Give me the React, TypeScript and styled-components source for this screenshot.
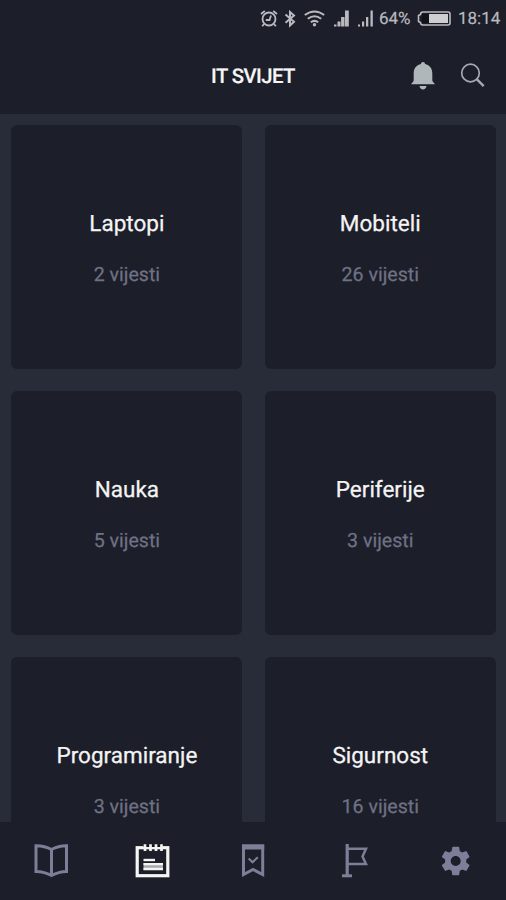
import React from 'react';
import styled, { createGlobalStyle } from 'styled-components';

const Global = createGlobalStyle`
  * { box-sizing: border-box; }
  body {
    margin: 0;
    background: #1c1e29;
    font-family: Roboto, sans-serif;
    text-rendering: geometricPrecision;
  }
`;

const Screen = styled.div`
  display: flex;
  flex-direction: column;
  width: 506px;
  height: 900px;
  overflow: hidden;
  background: #282c38;
`;

const StatusBar = styled.div`
  display: flex;
  align-items: center;
  justify-content: flex-end;
  flex: none;
  height: 38px;
  padding-right: 6px;
  background: #1c1e29;
  color: #b9bac0;
  font-size: 17px;
  line-height: 38px;
  -webkit-text-stroke: 0.2px currentColor;
`;

const StatusIcon = styled.svg<{ $gap: number }>`
  flex: none;
  display: block;
  margin-right: ${(p) => p.$gap}px;
`;

const StatusText = styled.span<{ $width: number }>`
  width: ${(p) => p.$width}px;
  white-space: nowrap;
`;

const Header = styled.header`
  display: grid;
  grid-template-columns: 1fr auto 1fr;
  align-items: center;
  flex: none;
  height: 76px;
  background: #1c1e29;
`;

const Title = styled.h1`
  grid-column: 2;
  margin: 0;
  color: #f6f6f6;
  font-size: 20.3px;
  font-weight: 500;
  letter-spacing: -0.55px;
  -webkit-text-stroke: 0.2px currentColor;
`;

const Actions = styled.div`
  display: flex;
  justify-content: flex-end;
  gap: 24.5px;
  padding-right: 20px;
`;

const IconButton = styled.button`
  display: flex;
  padding: 0;
  border: 0;
  background: none;
`;

const Grid = styled.main`
  display: grid;
  grid-template-columns: 231px 231px;
  grid-auto-rows: 244px;
  gap: 22px 22.4px;
  flex: none;
  height: 708px;
  padding: 11px 10px 0 11.4px;
  overflow: hidden;
`;

const Card = styled.section`
  display: flex;
  flex-direction: column;
  align-items: center;
  padding-top: 83.5px;
  border-radius: 6px;
  background: #1c1e29;
`;

const CardTitle = styled.h2`
  margin: 0;
  color: #f4f4f4;
  font-size: 22.5px;
  font-weight: 400;
  line-height: 30px;
  -webkit-text-stroke: 0.25px currentColor;
`;

const CardCount = styled.p`
  margin: 22px 0 0;
  color: #6f7184;
  font-size: 19.6px;
  line-height: 28px;
  -webkit-text-stroke: 0.25px currentColor;
`;

const TabBar = styled.nav`
  display: grid;
  grid-template-columns: repeat(5, 1fr);
  flex: none;
  height: 78px;
  background: #1c1e29;
`;

const Tab = styled.button<{ $active?: boolean }>`
  display: flex;
  align-items: center;
  justify-content: center;
  padding: 0;
  border: 0;
  background: none;
  color: ${(p) => (p.$active ? '#f5f5f2' : '#7d7e98')};
`;

const categories = [
  { name: 'Laptopi', count: 2 },
  { name: 'Mobiteli', count: 26 },
  { name: 'Nauka', count: 5 },
  { name: 'Periferije', count: 3 },
  { name: 'Programiranje', count: 3 },
  { name: 'Sigurnost', count: 16 },
];

const Alarm = () => (
  <StatusIcon $gap={6} width="18" height="18" viewBox="0 0 18 18" fill="none" stroke="#b9bac0" strokeWidth="1.8">
    <circle cx="9" cy="9" r="6.5" />
    <path d="M1 4 4.800 1M17 4 13.200 1M4 14l-1.800 2.200M14 14l1.800 2.200M11 5.500 9.500 10H5.800" />
  </StatusIcon>
);

const Bluetooth = () => (
  <StatusIcon $gap={8} width="12" height="18" viewBox="0 0 12 18" fill="none" stroke="#b9bac0" strokeWidth="2">
    <path d="M1.500 4.500 10 11.700 6 15.500V2L10 5.500 1.500 12.700" />
  </StatusIcon>
);

const Wifi = () => (
  <StatusIcon $gap={9} width="21" height="18" viewBox="0 0 21 18" fill="none" stroke="#b9bac0" strokeWidth="2">
    <path d="M.8 5Q10.500-2.200 20.200 5M3.800 8.700q6.700-5 13.400 0M6.800 12.300q3.700-2.800 7.400 0" />
    <circle cx="10.500" cy="14.800" r="1.700" fill="#b9bac0" stroke="none" />
  </StatusIcon>
);

const Signal = ({ full, gap }: { full?: boolean; gap: number }) => (
  <StatusIcon $gap={gap} width="15" height="18" viewBox="0 0 15 18" fill="#b9bac0">
    <path d={full
      ? 'M0 14.500h2.500v2H0zM3.500 11.500h3v5h-3zM7.100 7h3.400v9.500H7.100zM11 .5h3.800v16H11z'
      : 'M0 14.500h2v2H0zM4 11.500h2.200v5H4zM8 7h2.300v9.500H8zM12.500.5h2.300v16h-2.300z'} />
  </StatusIcon>
);

const Battery = () => (
  <StatusIcon $gap={7} width="34" height="16" viewBox="0 0 34 16">
    <path d="M6 1h25a2 2 0 0 1 2 2v9a2 2 0 0 1-2 2H6a2.500 2.500 0 0 1-2.500-2.500l-2-1v-6l2-1A2.500 2.500 0 0 1 6 1z" fill="none" stroke="#b9bac0" strokeWidth="1.600" />
    <path d="M12 3h19v9H12z" fill="#cfcfd1" />
    <path d="M5 3h7v9H5z" fill="#11131b" />
  </StatusIcon>
);

const Bell = () => (
  <svg width="26" height="30" viewBox="0 0 26 30" fill="#b0b7ba">
    <path d="M13 1c1.300 0 2 .8 2 2 4.800 1 7.300 4.600 7.300 9.500v7c.5 1.500 1.700 2.500 2.700 3.700H1C2 22 3.200 21 3.700 19.500v-7C3.700 7.600 6.200 4 11 3c0-1.200.7-2 2-2zM9.500 25h7c-.3 2.300-1.700 3.400-3.500 3.400S9.800 27.300 9.500 25z" />
  </svg>
);

const Search = () => (
  <svg width="26" height="30" viewBox="0 0 26 30" fill="none" stroke="#a5a9b0" strokeWidth="1.700">
    <circle cx="10.500" cy="12" r="8.800" />
    <path d="m16.700 18.200 7 7" strokeWidth="2.400" />
  </svg>
);

const Book = () => (
  <svg width="38" height="40" viewBox="0 0 38 40" fill="none" stroke="currentColor" strokeWidth="3">
    <path d="M19.500 8.500Q12.500 4.600 4 4.700v25.800Q12.500 30.700 19.500 34.500q7-3.800 15-4V4.700Q26.500 4.600 19.500 8.500zM19.500 8.500V34.500" />
  </svg>
);

const Notepad = () => (
  <svg width="38" height="40" viewBox="0 0 38 40">
    <rect x="4.200" y="6.700" width="30.600" height="28" fill="none" stroke="currentColor" strokeWidth="3.200" />
    <path d="M10.500 4h19v2h-19z" fill="#12141c" />
    <path d="M12 3.200v6.800M17.500 3.200v6.800M23 3.200v6.800M28.500 3.200v6.800" stroke="currentColor" strokeWidth="2.700" />
    <path d="M10.500 19h11.500" stroke="currentColor" strokeWidth="2.400" />
    <path d="M10.500 22h19.500v7H10.500z" fill="#a9aaad" />
    <path d="M10.500 23.200h19.500M10.500 28h19.500" stroke="currentColor" strokeWidth="2.300" />
  </svg>
);

const Bookmark = () => (
  <svg width="38" height="40" viewBox="0 0 38 40" fill="none" stroke="currentColor" strokeWidth="3">
    <path d="M9.500 5H28.700v28.500L19.100 28.500 9.500 33.500z" />
    <path d="M8 6h22.200" strokeWidth="5" />
    <path d="m14.700 17.500 3.800 3.700 5.300-5" strokeWidth="2.200" />
  </svg>
);

const Flag = () => (
  <svg width="38" height="40" viewBox="0 0 38 40" fill="none" stroke="currentColor" strokeWidth="2.500">
    <path d="M12.200 3v33" strokeWidth="3.200" />
    <path d="M7 34.800h10" strokeWidth="3" />
    <path d="M12.200 7.700h18.800l-3.500 7.700 3.500 7.600H12.200" />
  </svg>
);

const Gear = () => (
  <svg width="34" height="34" viewBox="-0.500 0 24 24" fill="currentColor">
    <path d="M19.430 12.980c.04-.32.07-.64.07-.98s-.03-.66-.07-.98l2.110-1.650c.19-.15.24-.42.12-.64l-2-3.460c-.12-.22-.39-.3-.61-.22l-2.490 1c-.52-.4-1.080-.73-1.690-.98l-.38-2.650C14.460 2.180 14.250 2 14 2h-4c-.25 0-.46.18-.49.42l-.38 2.650c-.61.25-1.170.59-1.690.98l-2.490-1c-.23-.09-.49 0-.61.22l-2 3.460c-.13.22-.07.49.12.64l2.110 1.650c-.04.32-.07.65-.07.98s.03.66.07.98l-2.110 1.650c-.19.15-.24.42-.12.64l2 3.460c.12.22.39.3.61.22l2.490-1c.52.4 1.080.73 1.690.98l.38 2.650c.03.24.24.42.49.42h4c.25 0 .46-.18.49-.42l.38-2.650c.61-.25 1.170-.59 1.690-.98l2.490 1c.23.09.49 0 .61-.22l2-3.460c.12-.22.07-.49-.12-.64l-2.110-1.650zM12 15.500c-1.930 0-3.500-1.570-3.500-3.500s1.570-3.500 3.500-3.500 3.500 1.570 3.500 3.500-1.570 3.500-3.500 3.500z" />
  </svg>
);

export default function App() {
  return (
    <Screen>
      <Global />
      <StatusBar>
        <Alarm />
        <Bluetooth />
        <Wifi />
        <Signal full gap={9} />
        <Signal gap={6} />
        <StatusText $width={38}>64%</StatusText>
        <Battery />
        <StatusText $width={42}>18:14</StatusText>
      </StatusBar>
      <Header>
        <Title>IT SVIJET</Title>
        <Actions>
          <IconButton aria-label="Obavijesti"><Bell /></IconButton>
          <IconButton aria-label="Pretraga"><Search /></IconButton>
        </Actions>
      </Header>
      <Grid>
        {categories.map((c) => (
          <Card key={c.name}>
            <CardTitle>{c.name}</CardTitle>
            <CardCount>{c.count} vijesti</CardCount>
          </Card>
        ))}
      </Grid>
      <TabBar>
        <Tab><Book /></Tab>
        <Tab $active><Notepad /></Tab>
        <Tab><Bookmark /></Tab>
        <Tab><Flag /></Tab>
        <Tab><Gear /></Tab>
      </TabBar>
    </Screen>
  );
}
